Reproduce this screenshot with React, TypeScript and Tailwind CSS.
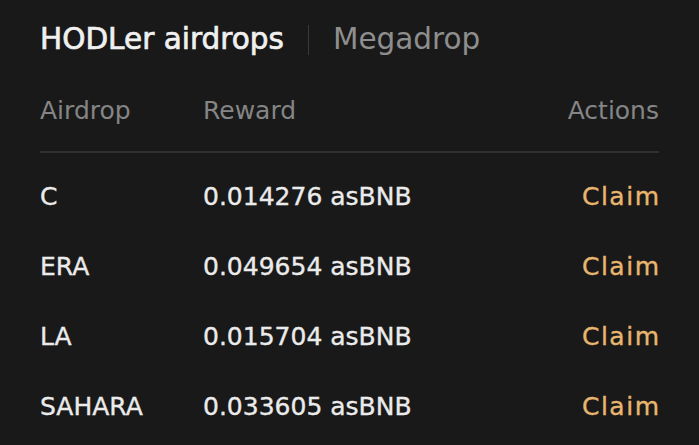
import React from 'react';

interface Airdrop {
  token: string;
  reward: string;
}

const airdrops: Airdrop[] = [
  { token: 'C', reward: '0.014276 asBNB' },
  { token: 'ERA', reward: '0.049654 asBNB' },
  { token: 'LA', reward: '0.015704 asBNB' },
  { token: 'SAHARA', reward: '0.033605 asBNB' },
];

const App: React.FC = () => {
  return (
    <div className="min-h-screen w-full bg-[#191919] px-10 font-['DejaVu_Sans',sans-serif]">
      {/* Tabs */}
      <div className="flex h-[80px] items-center">
        <span className="text-[29.5px] leading-none text-[#f0f0f0] [-webkit-text-stroke:0.7px_#f0f0f0]">
          HODLer airdrops
        </span>
        <div className="mx-[24px] h-[30px] w-px bg-[#3a3a3a]" />
        <span className="text-[29.5px] leading-none text-[#8e8e8e]">Megadrop</span>
      </div>

      {/* Table head */}
      <div className="flex h-[60px] items-center text-[25px] leading-none text-[#858585]">
        <div className="w-[163px]">Airdrop</div>
        <div className="flex-1">Reward</div>
        <div>Actions</div>
      </div>
      <div className="mt-[11px] h-[2px] bg-[#303030]" />

      {/* Rows */}
      <div className="mt-[8px]">
        {airdrops.map((a) => (
          <div
            key={a.token}
            className="flex h-[70px] items-center text-[25px] leading-none text-[#ebebeb] [-webkit-text-stroke:0.35px_#ebebeb]"
          >
            <div className="w-[163px]">{a.token}</div>
            <div className="flex-1">{a.reward}</div>
            <button
              type="button"
              className="-mr-[1.5px] cursor-pointer tracking-[1.5px] text-[#e8b66f] [-webkit-text-stroke:0.35px_#e8b66f]"
            >
              Claim
            </button>
          </div>
        ))}
      </div>
    </div>
  );
};

export default App;
